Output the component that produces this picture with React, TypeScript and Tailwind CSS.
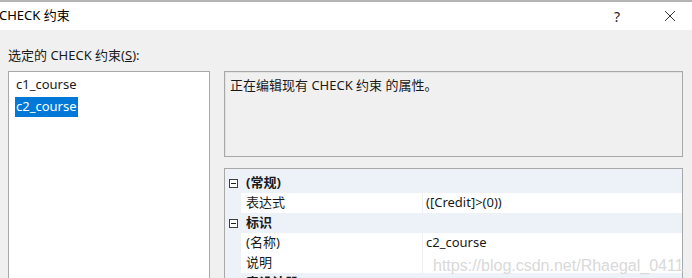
import React from "react";

const font = { fontFamily: '"Noto Sans", "Noto Sans CJK SC", sans-serif' };

function Minus() {
  return (
    <svg width="9" height="9" viewBox="0 0 9 9" className="block">
      <rect x="0.5" y="0.5" width="8" height="8" fill="white" stroke="#404040" />
      <line x1="2" y1="4.5" x2="7" y2="4.5" stroke="#202020" />
    </svg>
  );
}

function Category({ label }: { label: string }) {
  return (
    <div className="flex h-[20px] items-center bg-[#edf1f8]">
      <div className="flex w-[16px] justify-center pl-[1px]">
        <Minus />
      </div>
      <div className="pl-[5px] font-bold text-[13px] text-[#1a1a1a]">{label}</div>
    </div>
  );
}

function Prop({ name, value }: { name: string; value?: string }) {
  return (
    <div className="flex h-[20px] items-center">
      <div className="h-full w-[16px] bg-[#edf1f8]" />
      <div className="flex h-full w-[182px] items-center border-r border-[#f0f0f0] bg-white pl-[5px] text-[13px] text-[#1a1a1a]">
        {name}
      </div>
      <div className="flex h-full flex-1 items-center bg-white pl-[3px] text-[13px] text-[#1a1a1a]">
        {value}
      </div>
    </div>
  );
}

export default function App() {
  return (
    <div
      className="relative h-[278px] w-[692px] overflow-hidden bg-[#f0f0f0]"
      style={font}
    >
      <div className="flex h-[30px] items-center border-t-2 border-[#b4b4b4] bg-white">
        <div className="-ml-[1px] flex-1 text-[13px] text-black">CHECK 约束</div>
        <div className="w-[20px] text-[14px] text-[#222]">?</div>
        <div className="ml-[29px] mr-[15px] flex w-[14px] justify-center">
          <svg width="12" height="12" viewBox="0 0 12 12">
            <path d="M1 1 L11 11 M11 1 L1 11" stroke="#333" strokeWidth="1" />
          </svg>
        </div>
      </div>

      <div className="pl-[8px] pt-[16px]">
        <div className="h-[18px] text-[13px] leading-[18px] text-[#1a1a1a]">
          选定的 CHECK 约束(<span className="underline">S</span>):
        </div>
        <div className="mt-[7px] flex gap-[14px]">
          <div className="h-[260px] w-[202px] border border-[#a8a8a8] bg-white pl-[6px] pt-[3px]">
            <div className="flex h-[20px] items-center">
              <span className="px-[1px] text-[13px] text-[#1a1a1a]">c1_course</span>
            </div>
            <div className="mt-[2px] flex h-[20px] items-center">
              <span className="flex h-[20px] items-center bg-[#0078d7] px-[1px] text-[13px] text-white">
                c2_course
              </span>
            </div>
          </div>

          <div className="flex w-[459px] flex-col">
            <div className="h-[86px] border border-[#a8a8a8] bg-[#f0f0f0] pl-[5px] pt-[4px] shadow-[inset_1px_1px_0_#e3e3e3]">
              <div className="text-[13px] text-[#1a1a1a]">正在编辑现有 CHECK 约束 的属性。</div>
            </div>
            <div className="mt-[11px] h-[200px] border border-[#a8a8a8] bg-[#edf1f8] pt-[4px]">
              <Category label="(常规)" />
              <Prop name="表达式" value="([Credit]>(0))" />
              <Category label="标识" />
              <Prop name="(名称)" value="c2_course" />
              <Prop name="说明" />
              <Category label="表设计器" />
            </div>
          </div>
        </div>
      </div>

      <div
        className="pointer-events-none absolute left-[433px] top-[254px] whitespace-nowrap text-[16px] text-[#d9d9d9]"
        style={{ fontFamily: '"Liberation Sans", Arial, sans-serif' }}
      >
        https://blog.csdn.net/Rhaegal_0411
      </div>
    </div>
  );
}
